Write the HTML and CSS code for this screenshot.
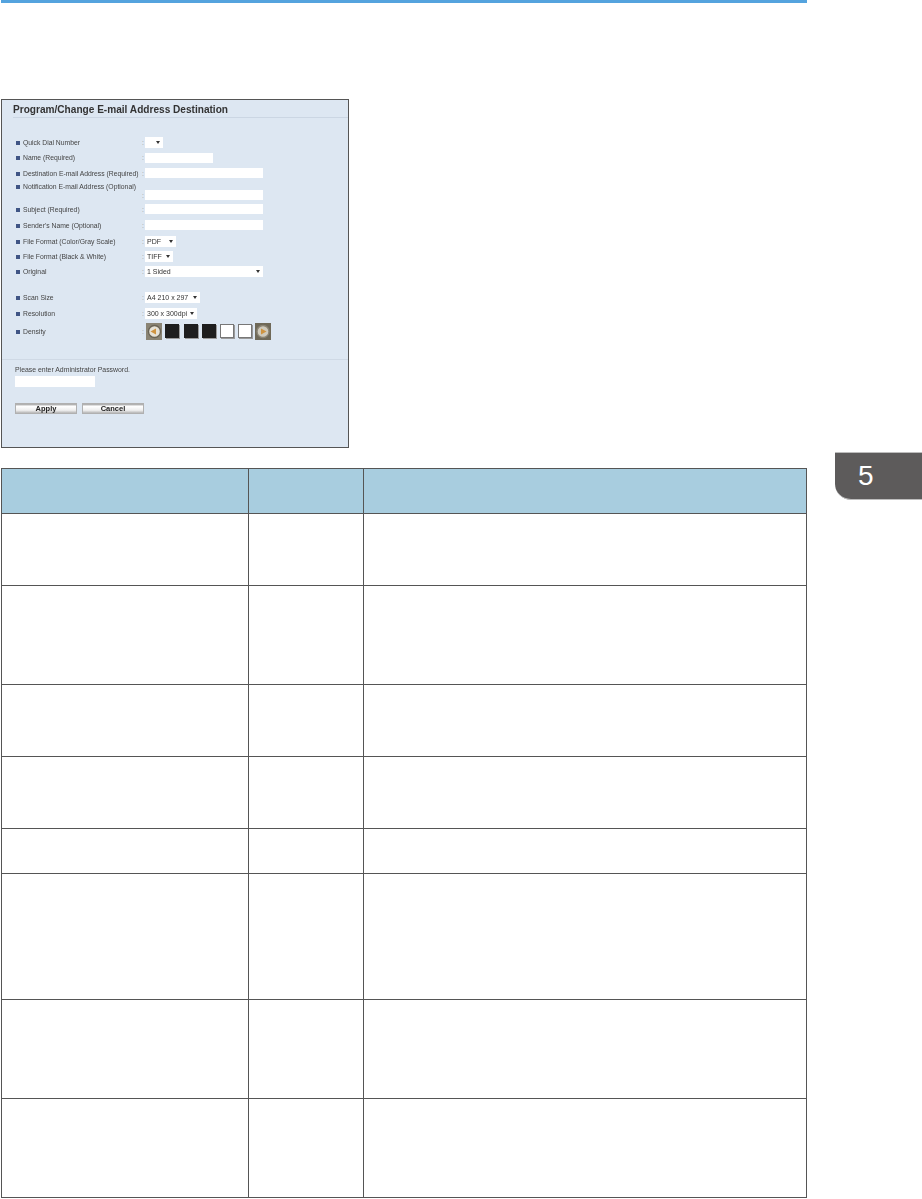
FILE: index.html
```html
<!DOCTYPE html>
<html lang="en">
<head>
    <meta charset="UTF-8">
    <title>Program/Change E-mail Address Destination</title>
    <link rel="stylesheet" href="styles.css">
</head>
<body>
<div class="page">
    <div class="main">
        <div class="top-bar"></div>

        <div class="panel">
            <div class="panel-title">Program/Change E-mail Address Destination</div>

            <div class="form-rows">
                <div class="row h16"><span class="label">Quick Dial Number</span><span class="colon">:</span><span class="select w18"><span class="arrow"></span></span></div>
                <div class="row h15"><span class="label">Name (Required)</span><span class="colon">:</span><span class="input w68"></span></div>
                <div class="row h16"><span class="label">Destination E-mail Address (Required)</span><span class="colon">:</span><span class="input w118"></span></div>
                <div class="row h20 notif"><span class="label">Notification E-mail Address (Optional)</span><span class="colon">:</span><span class="input w118"></span></div>
                <div class="row h16"><span class="label">Subject (Required)</span><span class="colon">:</span><span class="input w118"></span></div>
                <div class="row h16"><span class="label">Sender's Name (Optional)</span><span class="colon">:</span><span class="input w118"></span></div>
                <div class="row h16"><span class="label">File Format (Color/Gray Scale)</span><span class="colon">:</span><span class="select w31">PDF<span class="arrow"></span></span></div>
                <div class="row h15"><span class="label">File Format (Black &amp; White)</span><span class="colon">:</span><span class="select w28">TIFF<span class="arrow"></span></span></div>
                <div class="row h15 gap-after"><span class="label">Original</span><span class="colon">:</span><span class="select w118">1 Sided<span class="arrow"></span></span></div>
                <div class="row h16"><span class="label">Scan Size</span><span class="colon">:</span><span class="select w55">A4 210 x 297<span class="arrow"></span></span></div>
                <div class="row h16"><span class="label">Resolution</span><span class="colon">:</span><span class="select w52">300 x 300dpi<span class="arrow"></span></span></div>
                <div class="row h20"><span class="label">Density</span><span class="colon">:</span>
                    <div class="density">
                        <svg class="knob" viewBox="0 0 16 17"><rect width="16" height="17" fill="#8a8474"/><circle cx="8.5" cy="8.5" r="6" fill="#e6e2d6" stroke="#6a6455" stroke-width="1.4"/><path d="M4.5 8.5 10 5.5v6z" fill="#cf9440"/></svg>
                        <span class="cell on"></span>
                        <span class="cell on"></span>
                        <span class="cell on"></span>
                        <span class="cell"></span>
                        <span class="cell"></span>
                        <svg class="knob" viewBox="0 0 16 17"><rect width="16" height="17" fill="#6f6958"/><circle cx="8" cy="8.5" r="6" fill="#cfcabb" stroke="#8a8474" stroke-width="1.4"/><path d="M11.5 8.5 6 5.5v6z" fill="#cf9440"/></svg>
                    </div>
                </div>
            </div>

            <div class="admin">
                <div class="admin-text">Please enter Administrator Password.</div>
                <span class="input w80"></span>
                <div class="buttons">
                    <span class="btn">Apply</span>
                    <span class="btn">Cancel</span>
                </div>
            </div>
        </div>

        <table class="spec">
            <colgroup><col class="c1"><col class="c2"><col class="c3"></colgroup>
            <tr class="head r45"><td></td><td></td><td></td></tr>
            <tr class="r72"><td></td><td></td><td></td></tr>
            <tr class="r99"><td></td><td></td><td></td></tr>
            <tr class="r72"><td></td><td></td><td></td></tr>
            <tr class="r72"><td></td><td></td><td></td></tr>
            <tr class="r45"><td></td><td></td><td></td></tr>
            <tr class="r126"><td></td><td></td><td></td></tr>
            <tr class="r99"><td></td><td></td><td></td></tr>
            <tr class="r99"><td></td><td></td><td></td></tr>
        </table>
    </div>

    <div class="side">
        <div class="chapter-tab">5</div>
    </div>
</div>
</body>
</html>
```

FILE: styles.css
```css
html, body {
    margin: 0;
    background: #fff;
}
body {
    font-family: "Liberation Sans", Arial, sans-serif;
}
.page {
    display: flex;
    height: 1199px;
    overflow: hidden;
}
.main {
    width: 806px;
    margin-left: 1px;
}
.top-bar {
    height: 3px;
    background: #54a3de;
}

/* form screenshot */
.panel {
    box-sizing: border-box;
    width: 348px;
    height: 349px;
    margin-top: 96px;
    border: 1px solid #555;
    background: #dde7f2;
    color: #333;
}
.panel-title {
    box-sizing: border-box;
    height: 18px;
    margin-left: 11px;
    padding-top: 3px;
    border-bottom: 1px solid #cbd6e3;
    font-size: 10.1px;
    line-height: 14px;
    font-weight: bold;
    color: #333;
    filter: blur(0.35px);
}
.form-rows {
    margin-top: 16px;
}
.row {
    display: flex;
    align-items: center;
    font-size: 6.8px;
    color: #444;
}
.h15 { height: 15px; }
.h16 { height: 16px; }
.h20 { height: 20px; }
.gap-after { margin-bottom: 10px; }
.label {
    box-sizing: border-box;
    width: 140px;
    padding-left: 21px;
    position: relative;
    white-space: nowrap;
    filter: blur(0.35px);
}
.label::before {
    content: "";
    position: absolute;
    left: 14px;
    top: 2px;
    width: 4px;
    height: 4px;
    background: #3f5585;
}
.notif .label {
    align-self: flex-start;
    margin-top: 2px;
}
.colon {
    width: 3px;
    color: #999;
}
.notif .colon, .notif .input {
    margin-top: 8px;
}
.input, .select {
    display: block;
    box-sizing: border-box;
    height: 10px;
    background: #fff;
}
.select {
    position: relative;
    height: 11px;
    padding-left: 2px;
    font-size: 7px;
    line-height: 11px;
    color: #333;
    white-space: nowrap;
    filter: blur(0.3px);
}
.arrow {
    position: absolute;
    right: 3px;
    top: 4px;
    border-left: 2.5px solid transparent;
    border-right: 2.5px solid transparent;
    border-top: 3px solid #333;
}
.w18 { width: 18px; }
.w28 { width: 28px; }
.w31 { width: 31px; }
.w52 { width: 52px; }
.w55 { width: 55px; }
.w68 { width: 68px; }
.w80 { width: 80px; height: 11px; }
.w118 { width: 118px; }

.density {
    display: flex;
    align-items: center;
    gap: 4.25px;
    margin-left: 1px;
}
.knob {
    width: 16px;
    height: 17px;
    margin-right: -1px;
    filter: blur(0.3px);
}
.cell {
    box-sizing: border-box;
    width: 14px;
    height: 14px;
    background: #fff;
    border: 1px solid #777;
    box-shadow: 1px 1px 0 #9a9a9a;
}
.cell.on {
    background: #1e1e1e;
    border-color: #1e1e1e;
}
.density .knob:last-child {
    margin-left: -2px;
}

.admin {
    margin-top: 18px;
    padding: 5px 13px 0;
    border-top: 1px solid #cfd9e5;
}
.admin-text {
    height: 11px;
    font-size: 6.9px;
    line-height: 9px;
    color: #444;
    filter: blur(0.35px);
}
.buttons {
    display: flex;
    gap: 5px;
    margin-top: 16px;
}
.btn {
    box-sizing: border-box;
    width: 62px;
    height: 11px;
    background: linear-gradient(#9c9c9c 0, #fff 25%, #eee 70%, #b5b5b5 100%);
    border: 1px solid #b0b0b0;
    font-size: 7.5px;
    line-height: 9px;
    font-weight: bold;
    text-align: center;
    color: #222;
    filter: blur(0.3px);
}

/* empty spec table */
.spec {
    width: 806px;
    margin-top: 20px;
    border-collapse: collapse;
    table-layout: fixed;
}
.spec td {
    padding: 0;
    border: 1px solid #555;
}
.c1 { width: 247px; }
.c2 { width: 115px; }
.head td { background: #a8cddf; }
.r45 td { height: 44px; }
.r72 td { height: 71px; }
.r99 td { height: 98px; }
.r126 td { height: 125px; }

/* chapter tab on the right */
.side {
    flex: 1;
    padding: 452px 0 0 28px;
}
.chapter-tab {
    box-sizing: border-box;
    height: 48px;
    padding: 5px 0 0 23px;
    background: #5d5b5b;
    border-top: 1px solid #bdbdbd;
    border-bottom: 1px solid #bdbdbd;
    border-bottom-left-radius: 16px;
    font-size: 28px;
    line-height: 36px;
    color: #fff;
}
```
